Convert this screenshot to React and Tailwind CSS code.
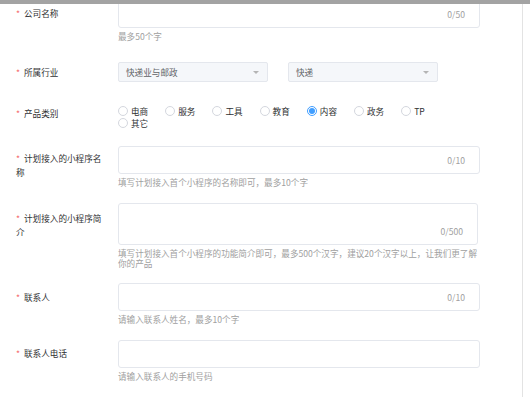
import { useState } from "react"

const Label = ({ children, className = "" }) => (
  <div className={`w-[102px] shrink-0 pr-[14px] text-[8.6px] leading-[14px] text-[#303133] ${className}`}>
    <span className="text-[#f56c6c] mr-[4px]">*</span>
    {children}
  </div>
)

const Help = ({ children }) => (
  <div className="mt-[3px] text-[8.6px] leading-[10px] text-[#a0a0a0]">{children}</div>
)

const TextInput = ({ max }) => (
  <div className="h-[28px] w-[362px] border border-[#e4e7ed] rounded-[3px] bg-white flex items-center pl-[8px] pr-[14px]">
    <input className="flex-1 min-w-0 bg-transparent outline-none text-[8.6px]" />
    {max != null && <span className="text-[8.6px] text-[#a0a0a0]">0/{max}</span>}
  </div>
)

const Select = ({ value }) => (
  <div className="w-[150px] h-[20px] bg-[#f5f7fa] border border-[#e4e7ed] rounded-[2px] flex items-center justify-between pl-[7px] pr-[8px] text-[8.6px] text-[#606266]">
    <span>{value}</span>
    <span className="w-0 h-0 border-l-[3px] border-r-[3px] border-t-[3px] border-l-transparent border-r-transparent border-t-[#b4b4b4]" />
  </div>
)

const categories = ["电商", "服务", "工具", "教育", "内容", "政务", "TP", "其它"]

export default function App() {
  const [category, setCategory] = useState("内容")

  return (
    <div className="relative flex w-[530px] h-[397px] overflow-hidden bg-white font-['Noto_Sans_CJK_SC',sans-serif]">
      {/* sticky header edge over the scrolled form */}
      <div className="absolute top-0 left-0 right-0 h-[4px] bg-[#a3a3a3]" />

      <div className="flex-1 pl-[16px]">
        <div className="flex">
          <Label className="pt-[6px]">公司名称</Label>
          <div>
            <TextInput max={50} />
            <Help>最多50个字</Help>
          </div>
        </div>

        <div className="flex items-center mt-[21px]">
          <Label>所属行业</Label>
          <div className="flex gap-[20px]">
            <Select value="快递业与邮政" />
            <Select value="快递" />
          </div>
        </div>

        <div className="flex mt-[23px]">
          <Label className="pt-[1px]">产品类别</Label>
          <div className="flex flex-wrap w-[340px] text-[8.6px] leading-[12px] text-[#303133]">
            {categories.map((c) => (
              <label key={c} className="flex items-center mr-[17px] cursor-pointer" onClick={() => setCategory(c)}>
                {category === c ? (
                  <span className="w-[10px] h-[10px] rounded-full border border-[#409eff] bg-white flex items-center justify-center">
                    <span className="w-[6px] h-[6px] rounded-full bg-[#409eff]" />
                  </span>
                ) : (
                  <span className="w-[10px] h-[10px] rounded-full border border-[#d4d7de] bg-white" />
                )}
                <span className="ml-[3px]">{c}</span>
              </label>
            ))}
          </div>
        </div>

        <div className="flex mt-[17px]">
          <Label className="pt-[5px]">计划接入的小程序名称</Label>
          <div>
            <TextInput max={10} />
            <Help>填写计划接入首个小程序的名称即可，最多10个字</Help>
          </div>
        </div>

        <div className="flex mt-[16px]">
          <Label className="pt-[8px]">计划接入的小程序简介</Label>
          <div className="w-[362px]">
            <div className="h-[42px] w-[360px] border border-[#e4e7ed] rounded-[3px] bg-white flex flex-col justify-end items-end pr-[14px] pb-[7px]">
              <span className="text-[8.6px] leading-[12px] text-[#a0a0a0]">0/500</span>
            </div>
            <Help>填写计划接入首个小程序的功能简介即可，最多500个汉字，建议20个汉字以上，让我们更了解你的产品</Help>
          </div>
        </div>

        <div className="flex mt-[15px]">
          <Label className="pt-[7px]">联系人</Label>
          <div>
            <TextInput max={10} />
            <Help>请输入联系人姓名，最多10个字</Help>
          </div>
        </div>

        <div className="flex mt-[16px]">
          <Label className="pt-[6px]">联系人电话</Label>
          <div>
            <TextInput />
            <Help>请输入联系人的手机号码</Help>
          </div>
        </div>
      </div>

      <div className="w-[8px] shrink-0 border-l border-[#e3e3e3] bg-white" />
    </div>
  )
}
